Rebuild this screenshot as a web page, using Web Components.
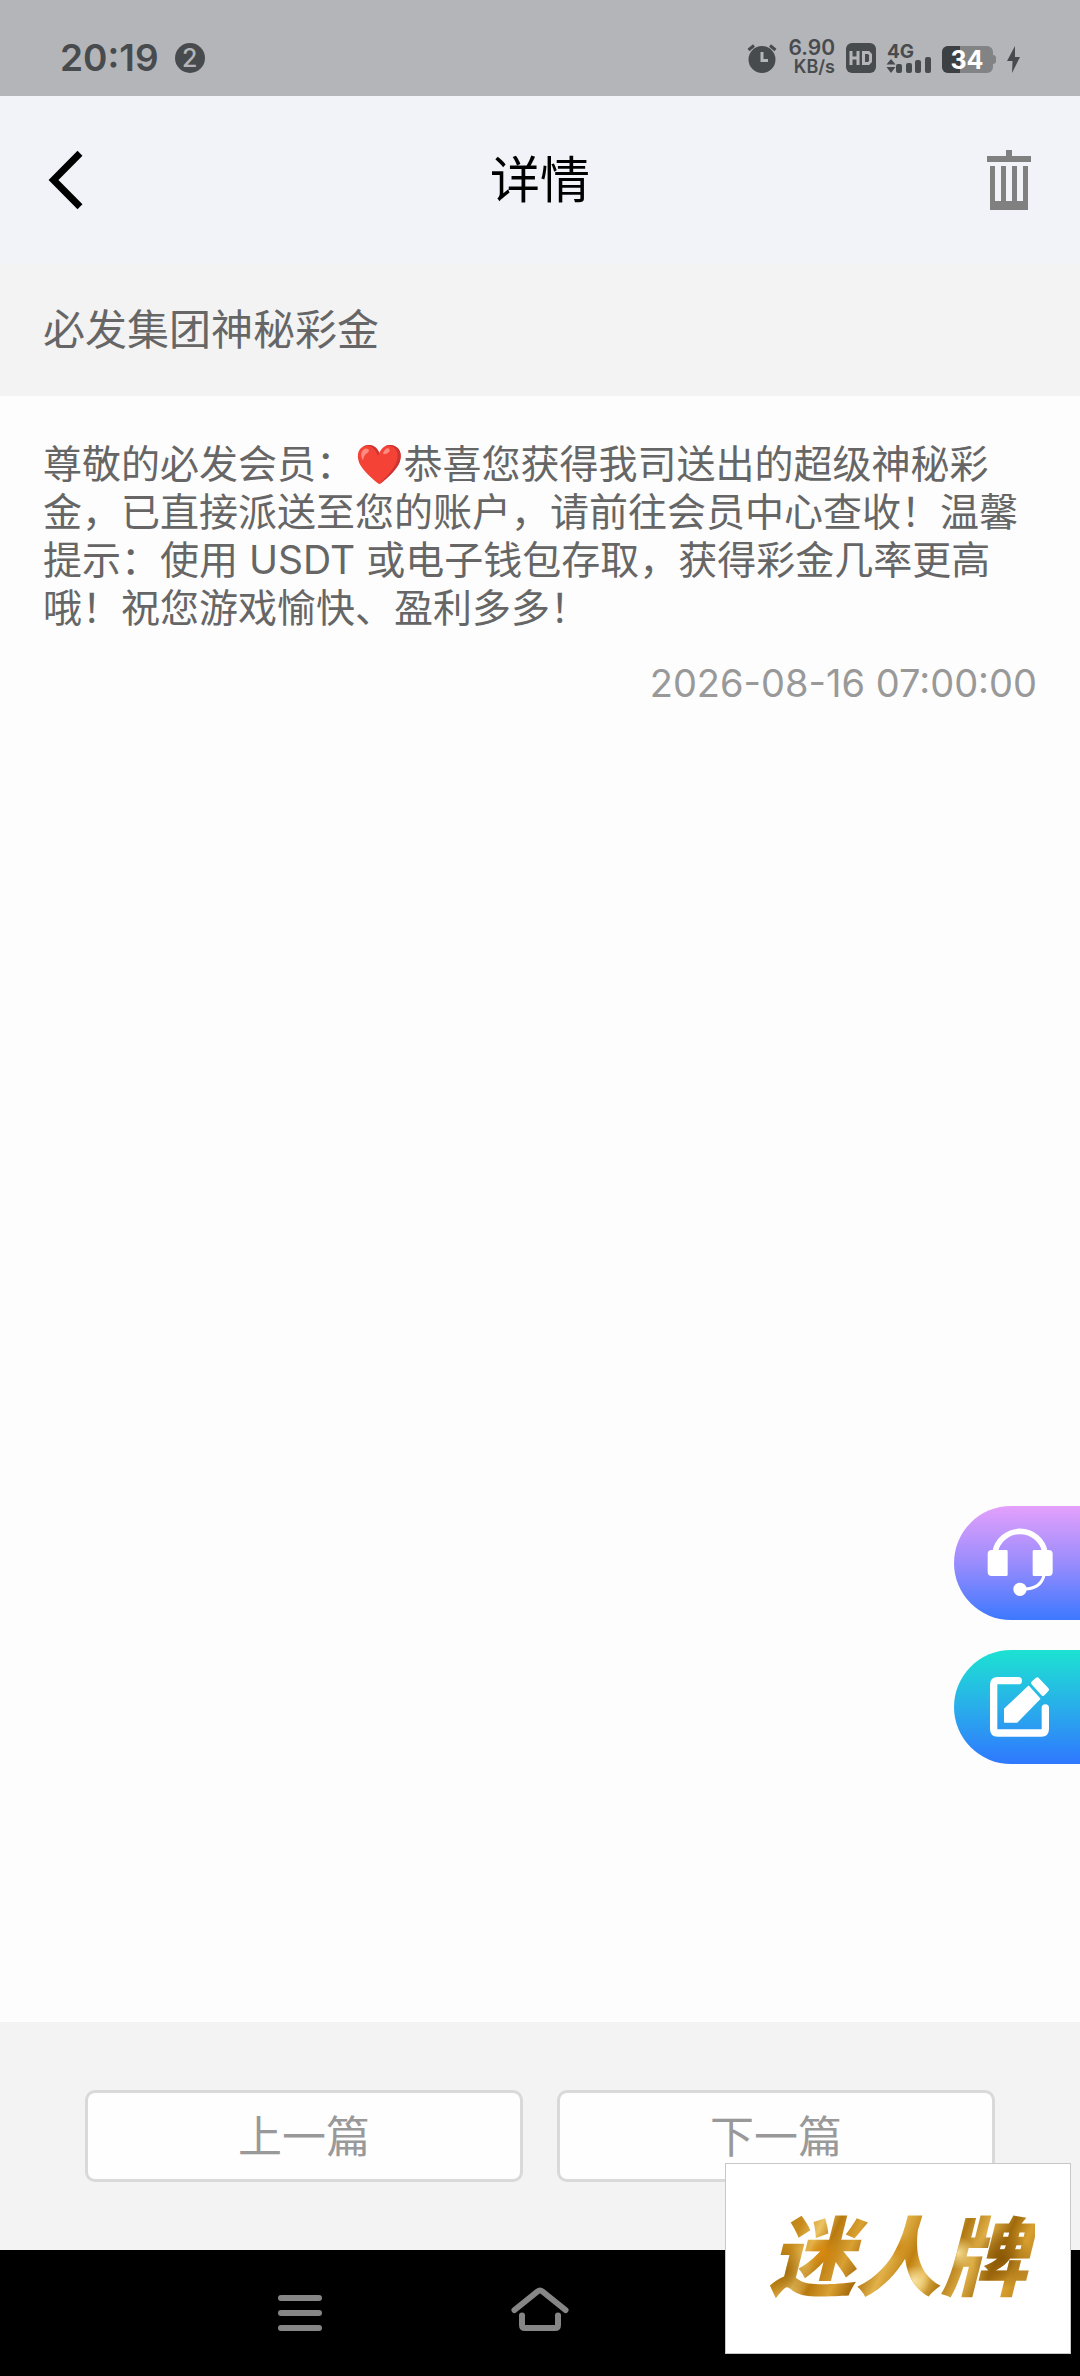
<!DOCTYPE html>
<html lang="zh-CN">
<head>
    <meta charset="UTF-8">
    <meta name="viewport" content="width=device-width, initial-scale=1">
    <title>详情</title>
    <style>
        html, body {
            margin: 0;
            height: 100%;
        }

        body {
            font-family: Inter, "Noto Sans CJK SC", "Noto Color Emoji", sans-serif;
            background: #fdfdfd;
            color: #666;
        }
    </style>
</head>
<body>
    <message-page>
        <status-bar slot="top" time="20:19" count="2" speed="6.90" battery="34"></status-bar>
        <page-header slot="top">详情</page-header>
        <message-detail date="2026-08-16 07:00:00">
            <span slot="subject">必发集团神秘彩金</span>
            尊敬的必发会员：❤️恭喜您获得我司送出的超级神秘彩金，已直接派送至您的账户，请前往会员中心查收！温馨提示：使用 USDT 或电子钱包存取，获得彩金几率更高哦！祝您游戏愉快、盈利多多！
        </message-detail>
        <message-pager slot="bottom"></message-pager>
        <nav-bar slot="bottom"></nav-bar>
        <float-actions slot="overlay"></float-actions>
        <brand-card slot="overlay">迷人牌</brand-card>
    </message-page>

    <script>
        class MessagePage extends HTMLElement {
            constructor() {
                super();
                this.attachShadow({ mode: 'open' });
            }

            connectedCallback() {
                this.shadowRoot.innerHTML = `
                    <style>
                        :host {
                            display: flex;
                            flex-direction: column;
                            position: relative;
                            min-height: 100%;
                        }

                        main {
                            flex: 1;
                        }
                    </style>

                    <slot name="top"></slot>
                    <main><slot></slot></main>
                    <slot name="bottom"></slot>
                    <slot name="overlay"></slot>
                `;
            }
        }

        class StatusBar extends HTMLElement {
            constructor() {
                super();
                this.attachShadow({ mode: 'open' });
            }

            connectedCallback() {
                this.shadowRoot.innerHTML = `
                    <style>
                        :host {
                            display: flex;
                            justify-content: space-between;
                            align-items: center;
                            box-sizing: border-box;
                            height: 96px;
                            padding: 20px 60px 0;
                            background: #b4b5b9;
                            color: #484b4d;
                        }

                        .group {
                            display: flex;
                            align-items: center;
                            gap: 11px;
                        }

                        .left {
                            gap: 16px;
                        }

                        .time {
                            font-size: 37px;
                            font-weight: 600;
                            line-height: 40px;
                        }

                        .count {
                            width: 30px;
                            border-radius: 50%;
                            background: #484b4d;
                            color: #b4b5b9;
                            font-size: 25px;
                            font-weight: 500;
                            line-height: 30px;
                            text-align: center;
                        }

                        .speed {
                            display: grid;
                            padding-bottom: 2px;
                            font-size: 21px;
                            font-weight: 600;
                            line-height: 20px;
                            text-align: right;
                        }

                        .speed small {
                            font-size: 18px;
                            line-height: 18px;
                        }

                        svg {
                            display: block;
                            overflow: visible;
                            fill: currentColor;
                        }
                    </style>

                    <div class="group left">
                        <span class="time">${this.getAttribute('time')}</span>
                        <span class="count">${this.getAttribute('count')}</span>
                    </div>
                    <div class="group">
                        <svg width="30" height="30" viewBox="0 0 30 30">
                            <circle cx="15" cy="16.5" r="13.5"/>
                            <path d="M1.5 7 7 2.5M28.5 7 23 2.5" fill="none" stroke="currentColor" stroke-width="3"/>
                            <path d="M15 9v8.5h6" fill="none" stroke="#b4b5b9" stroke-width="3"/>
                        </svg>
                        <div class="speed">
                            <span>${this.getAttribute('speed')}</span>
                            <small>KB/s</small>
                        </div>
                        <svg width="30" height="30" viewBox="0 0 30 30">
                            <rect width="30" height="30" rx="6"/>
                            <path d="M5 8v14M12 8v14M5 15h7M17.5 9.500h5l2 2v7l-2 2h-5z" fill="none" stroke="#b4b5b9" stroke-width="3"/>
                        </svg>
                        <svg width="44" height="30" viewBox="0 0 44 30">
                            <text x="0" y="15" font-size="19" font-weight="700">4G</text>
                            <path d="M4 16l4.500 5.500h-9zM4 30l4.500-6h-9z"/>
                            <rect x="9" y="21" width="6" height="9" rx="2"/>
                            <rect x="19" y="20" width="6" height="10" rx="2"/>
                            <rect x="28" y="17" width="6" height="13" rx="2"/>
                            <rect x="38" y="14" width="6" height="16" rx="2"/>
                        </svg>
                        <svg width="54" height="30" viewBox="0 0 54 30">
                            <rect y="3" width="51" height="27" rx="6" fill="#828384"/>
                            <path d="M18 3H6a6 6 0 0 0-6 6v15a6 6 0 0 0 6 6h12z" fill="#3d4042"/>
                            <path d="M51 12q3 0 3 3v3q0 3-3 3z" fill="#828384"/>
                            <text x="25" y="26" font-size="25" font-weight="700" text-anchor="middle" fill="#fff">${this.getAttribute('battery')}</text>
                        </svg>
                        <svg width="13" height="30" viewBox="0 0 13 30">
                            <path d="M8 3 0 18h5.500L5 30l8-16H8z"/>
                        </svg>
                    </div>
                `;
            }
        }

        class PageHeader extends HTMLElement {
            constructor() {
                super();
                this.attachShadow({ mode: 'open' });
            }

            connectedCallback() {
                this.shadowRoot.innerHTML = `
                    <style>
                        :host {
                            display: grid;
                            grid-template-columns: 1fr auto 1fr;
                            align-items: center;
                            height: 168px;
                            padding: 0 48px;
                            background: #f1f3f8;
                            color: #000;
                        }

                        h1 {
                            margin: 0;
                            font-size: 50px;
                            font-weight: 400;
                            line-height: 72px;
                        }

                        button {
                            padding: 0;
                            border: 0;
                            background: none;
                            color: inherit;
                        }

                        .remove {
                            justify-self: end;
                            color: #808080;
                        }

                        svg {
                            display: block;
                        }
                    </style>

                    <button type="button" class="back" aria-label="返回">
                        <svg width="36" height="60" viewBox="0 0 36 60" fill="none" stroke="currentColor" stroke-width="7">
                            <path d="M32 3.300 5.500 30 32 56.700"/>
                        </svg>
                    </button>
                    <h1><slot></slot></h1>
                    <button type="button" class="remove" aria-label="删除">
                        <svg width="46" height="60" viewBox="0 0 46 60" fill="currentColor">
                            <path d="M20 0h6v6h19v6H1V6h19zM4 16h5v35h6V16h5v35h6V16h5v35h6V16h5v44H4z"/>
                        </svg>
                    </button>
                `;
            }
        }

        class MessageDetail extends HTMLElement {
            constructor() {
                super();
                this.attachShadow({ mode: 'open' });
            }

            connectedCallback() {
                this.shadowRoot.innerHTML = `
                    <style>
                        :host {
                            display: block;
                        }

                        h2 {
                            margin: 0;
                            padding: 36px 43px;
                            background: #f3f3f3;
                            font-size: 42px;
                            font-weight: 400;
                            line-height: 60px;
                        }

                        article {
                            padding: 44px 43px;
                        }

                        p {
                            margin: 0;
                            font-size: 39px;
                            line-height: 48px;
                        }

                        time {
                            display: block;
                            margin-top: 27px;
                            font-size: 38px;
                            line-height: 48px;
                            text-align: right;
                            color: #999;
                        }
                    </style>

                    <h2><slot name="subject"></slot></h2>
                    <article>
                        <p><slot></slot></p>
                        <time>${this.getAttribute('date')}</time>
                    </article>
                `;
            }
        }

        class MessagePager extends HTMLElement {
            constructor() {
                super();
                this.attachShadow({ mode: 'open' });
            }

            connectedCallback() {
                this.shadowRoot.innerHTML = `
                    <style>
                        :host {
                            display: flex;
                            gap: 34px;
                            padding: 68px 85px;
                            background: #f3f3f3;
                        }

                        button {
                            flex: 1;
                            height: 92px;
                            padding: 0 0 4px;
                            border: 3px solid #d9d9d9;
                            border-radius: 10px;
                            background: #fefefe;
                            color: #999;
                            font-family: inherit;
                            font-size: 44px;
                        }
                    </style>

                    <button type="button">上一篇</button>
                    <button type="button">下一篇</button>
                `;
            }
        }

        class NavBar extends HTMLElement {
            constructor() {
                super();
                this.attachShadow({ mode: 'open' });
            }

            connectedCallback() {
                this.shadowRoot.innerHTML = `
                    <style>
                        :host {
                            display: flex;
                            justify-content: center;
                            height: 126px;
                            background: #000;
                        }

                        button {
                            width: 240px;
                            padding: 0;
                            border: 0;
                            background: none;
                            color: #868686;
                        }

                        svg {
                            display: block;
                            margin: 0 auto;
                            fill: none;
                            stroke: currentColor;
                            stroke-width: 6px;
                            stroke-linecap: round;
                            stroke-linejoin: round;
                        }
                    </style>

                    <button type="button" aria-label="菜单">
                        <svg width="60" height="60" viewBox="0 0 60 60">
                            <path d="M11 15h38M11 30h38M11 45h38"/>
                        </svg>
                    </button>
                    <button type="button" aria-label="主页">
                        <svg width="60" height="60" viewBox="0 0 60 60">
                            <path d="M4.500 27 27.500 8.500q2.500-2 5 0L55.500 27M12 32.500V42q0 3 3 3h30q3 0 3-3v-9.500"/>
                        </svg>
                    </button>
                    <button type="button" aria-label="后退">
                        <svg width="60" height="60" viewBox="0 0 60 60">
                            <path d="M36 14 20 30l16 16"/>
                        </svg>
                    </button>
                `;
            }
        }

        class FloatActions extends HTMLElement {
            constructor() {
                super();
                this.attachShadow({ mode: 'open' });
            }

            connectedCallback() {
                this.shadowRoot.innerHTML = `
                    <style>
                        :host {
                            display: grid;
                            gap: 30px;
                            position: absolute;
                            right: 0;
                            bottom: 612px;
                        }

                        button {
                            padding: 0;
                            border: 0;
                            border-radius: 57px 0 0 57px;
                            color: #fff;
                        }

                        .service {
                            background: linear-gradient(#e3a0fb, #9a8cfd 50%, #3c78ff);
                        }

                        .feedback {
                            background: linear-gradient(#1ce2d2, #29aeea 50%, #2f78ff);
                        }

                        svg {
                            display: block;
                        }
                    </style>

                    <button type="button" class="service" aria-label="客服">
                        <svg width="126" height="114" viewBox="0 0 378 342" fill="currentColor">
                            <path d="M123 140A76 76 0 0 1 273 140" fill="none" stroke="currentColor" stroke-width="17"/>
                            <path d="M113 132h44q4 0 4 4v70q0 4-4 4h-44q-12 0-12-12v-54q0-12 12-12zM240 132h44q12 0 12 12v54q0 12-12 12h-44q-4 0-4-4v-70q0-4 4-4z"/>
                            <path d="M270 208C264 232 244 248 212 249" fill="none" stroke="currentColor" stroke-width="9"/>
                            <circle cx="198" cy="250" r="20"/>
                        </svg>
                    </button>
                    <button type="button" class="feedback" aria-label="反馈">
                        <svg width="126" height="114" viewBox="0 0 378 342" fill="currentColor">
                            <path d="M193 92H131q-12 0-12 12v133q0 12 12 12h131q12 0 12-12v-63" fill="none" stroke="currentColor" stroke-width="22" stroke-linecap="round"/>
                            <path d="M152 177 224 109 257 146 189 216H152z" stroke="currentColor" stroke-width="4" stroke-linejoin="round"/>
                            <path d="M237 99 250 88 279 119 267 132z" stroke="currentColor" stroke-width="12" stroke-linejoin="round"/>
                        </svg>
                    </button>
                `;
            }
        }

        class BrandCard extends HTMLElement {
            constructor() {
                super();
                this.attachShadow({ mode: 'open' });
            }

            connectedCallback() {
                this.shadowRoot.innerHTML = `
                    <style>
                        :host {
                            display: grid;
                            place-items: center;
                            position: absolute;
                            right: 9px;
                            bottom: 22px;
                            box-sizing: border-box;
                            width: 346px;
                            height: 191px;
                            border: 1px solid #c8c8c8;
                            background: #fff;
                        }

                        /* gold foil: light and dark patches over a diagonal base */
                        strong {
                            padding: 0 8px 2px;
                            background:
                                radial-gradient(circle at 56% 68%, #f8e2a0, transparent 9%),
                                radial-gradient(circle at 22% 45%, #d88a10, transparent 9%),
                                radial-gradient(circle at 50% 40%, #cf8c18, transparent 9%),
                                radial-gradient(circle at 72% 45%, #f6dc90, transparent 8%),
                                radial-gradient(circle at 88% 50%, #8a5806, transparent 12%),
                                radial-gradient(circle at 8% 60%, #a06808, transparent 10%),
                                linear-gradient(115deg, #a86c0a, #b87c12 8%, #c88c1c 16%, #ecc464 22%, #b87a10 27%, #d9a032 34%, #a86c0c 40%, #e2b24a 47%, #c08010 54%, #e8bd58 60%, #b07812 66%, #e0b048 73%, #a06a0c 80%, #d8a030 86%, #9a640a);
                            background-clip: text;
                            -webkit-background-clip: text;
                            color: transparent;
                            font-size: 86px;
                            font-style: italic;
                            font-weight: 900;
                            line-height: 120px;
                        }
                    </style>

                    <strong><slot></slot></strong>
                `;
            }
        }

        customElements.define('message-page', MessagePage);
        customElements.define('status-bar', StatusBar);
        customElements.define('page-header', PageHeader);
        customElements.define('message-detail', MessageDetail);
        customElements.define('message-pager', MessagePager);
        customElements.define('nav-bar', NavBar);
        customElements.define('float-actions', FloatActions);
        customElements.define('brand-card', BrandCard);
    </script>
</body>
</html>
